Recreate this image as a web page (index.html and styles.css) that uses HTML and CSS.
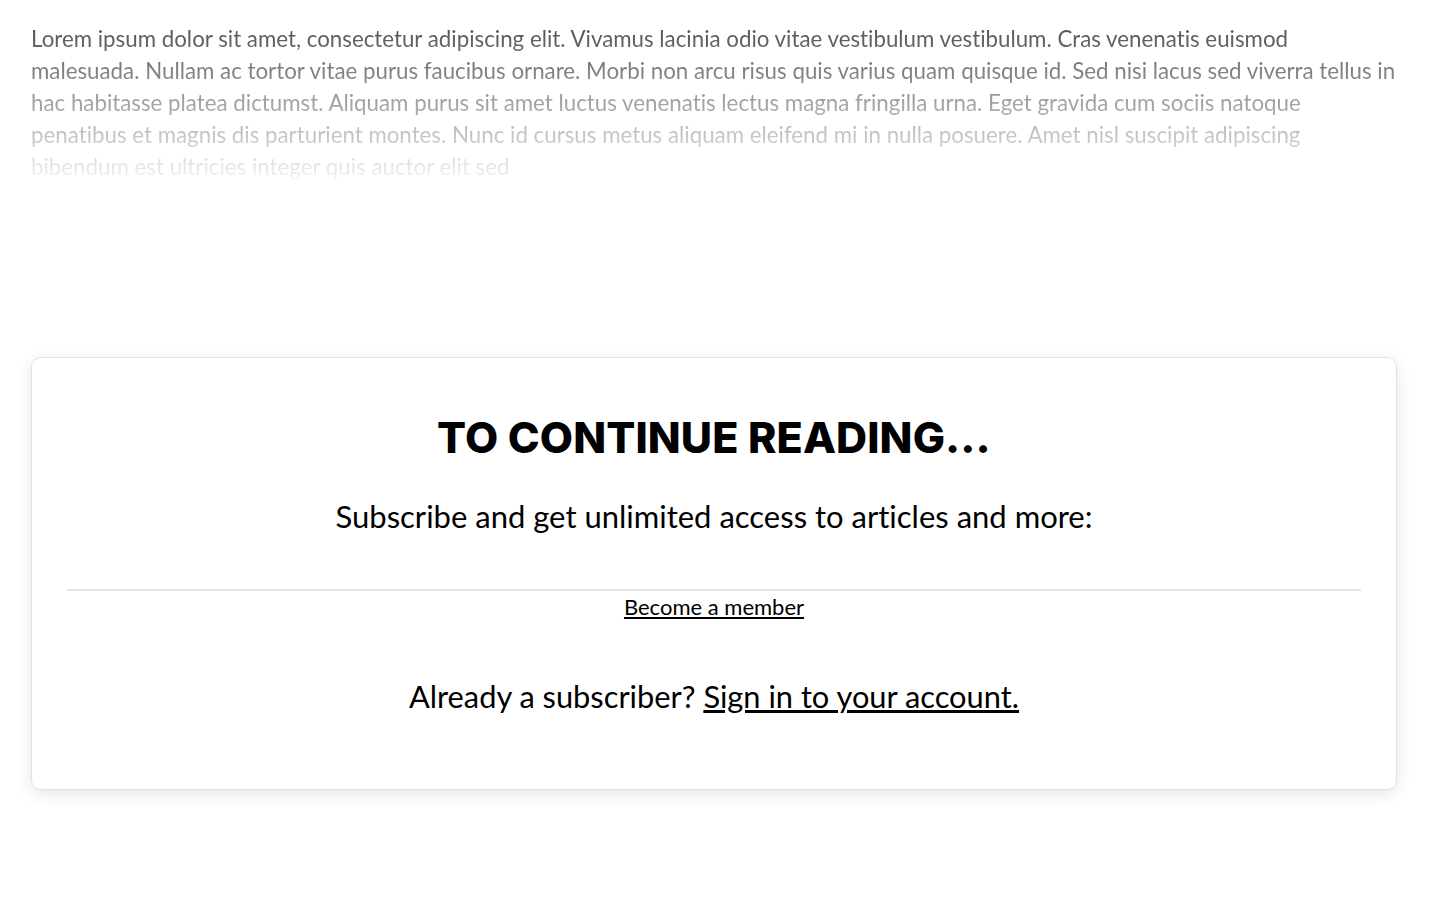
FILE: index.html
```html
<!DOCTYPE html>
<html lang="en">
<head>
  <meta charset="UTF-8" />
  <meta name="viewport" content="width=device-width, initial-scale=1.0"/>
  <title>Article</title>
  <link rel="stylesheet" href="styles.css">
</head>
<body>
  <main class="article">
    <p class="teaser">
      Lorem ipsum dolor sit amet, consectetur adipiscing elit. Vivamus lacinia odio vitae vestibulum vestibulum. Cras venenatis euismod malesuada. Nullam ac tortor vitae purus faucibus ornare. Morbi non arcu risus quis varius quam quisque id. Sed nisi lacus sed viverra tellus in hac habitasse platea dictumst. Aliquam purus sit amet luctus venenatis lectus magna fringilla urna. Eget gravida cum sociis natoque penatibus et magnis dis parturient montes. Nunc id cursus metus aliquam eleifend mi in nulla posuere. Amet nisl suscipit adipiscing bibendum est ultricies integer quis auctor elit sed
    </p>

    <!-- paywall box -->
    <section class="paywall">
      <h2>TO CONTINUE READING...</h2>
      <p class="pitch">Subscribe and get unlimited access to articles and more:</p>
      <hr />
      <a href="#" class="member-link">Become a member</a>
      <p class="signin">Already a subscriber? <a href="#">Sign in to your account.</a></p>
    </section>
  </main>
</body>
</html>
```

FILE: styles.css
```css
* {
  box-sizing: border-box;
  margin: 0;
  padding: 0;
}

body {
  background: #fff;
  color: #000;
  font-family: 'Lato', sans-serif;
  font-variant-ligatures: none;
}

.article {
  padding: 23px 43px 40px 31px;
}

/* preview text fades out towards the paywall */
.teaser {
  font-size: 22.3px;
  line-height: 32px;
  color: #3a3a3a;
  height: 160px;
  overflow: hidden;
  -webkit-mask-image: linear-gradient(to bottom, rgba(0,0,0,0.9) 0%, rgba(0,0,0,0.04) 100%);
  mask-image: linear-gradient(to bottom, rgba(0,0,0,0.9) 0%, rgba(0,0,0,0.04) 100%);
}

.paywall {
  margin-top: 174px;
  border: 1px solid #e2e2e2;
  border-radius: 10px;
  box-shadow: 0 4px 16px rgba(0,0,0,0.1);
  padding: 50px 35px 72px;
  text-align: center;
}

.paywall h2 {
  font-family: 'Inter', sans-serif;
  font-weight: 800;
  font-size: 43px;
  line-height: 58px;
  letter-spacing: 0.1px;
}

.pitch {
  font-size: 31px;
  line-height: 40px;
  margin-top: 30px;
}

.paywall hr {
  border: none;
  border-top: 2px solid #e6e6e6;
  margin-top: 53px;
}

.member-link {
  display: inline-block;
  font-size: 22px;
  line-height: 30px;
  color: #000;
  margin-top: 1px;
}

.signin {
  font-size: 30.8px;
  line-height: 40px;
  margin-top: 55px;
}

.signin a {
  color: #000;
}
```
